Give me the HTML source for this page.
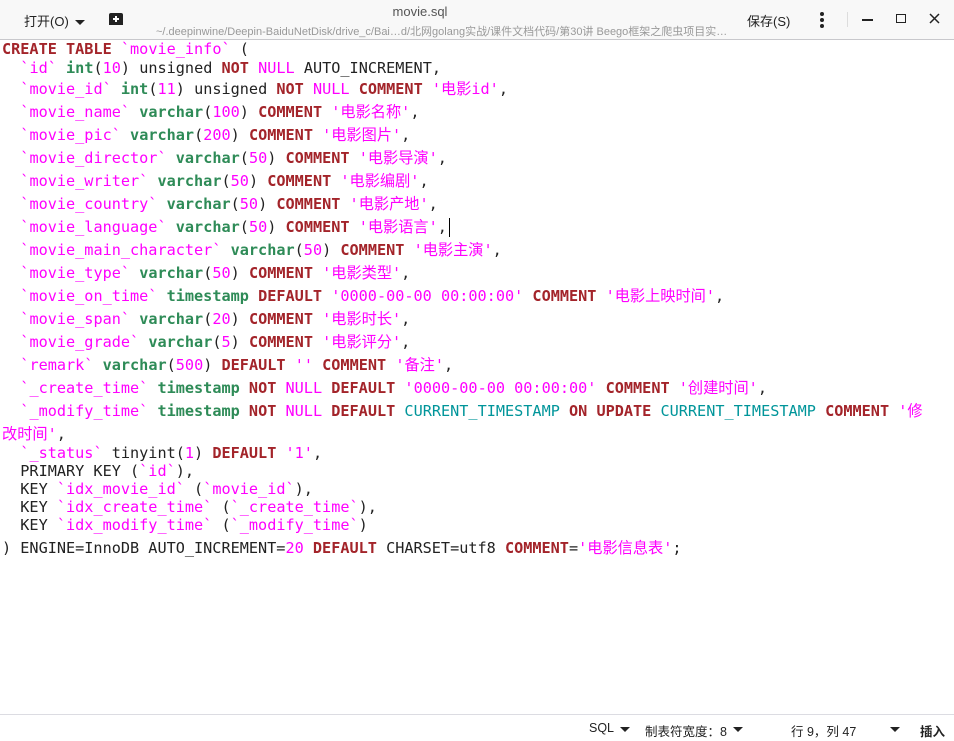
<!DOCTYPE html>
<html><head><meta charset="utf-8"><style>
*{margin:0;padding:0;box-sizing:border-box}
body{width:954px;height:741px;background:#fff;position:relative;overflow:hidden;font-family:"Liberation Sans","Noto Sans CJK SC",sans-serif}
#hdr{position:absolute;left:0;top:0;width:954px;height:40px;background:#f8f8f8;border-bottom:1px solid #c8c8cc}
#hdr .t{position:absolute;font-size:13px;color:#222}
.ed{position:absolute;left:2px;font-family:"DejaVu Sans Mono","Noto Sans CJK SC",monospace;font-size:15.2px;color:#222;white-space:pre;line-height:18px;height:18px}
.k{color:#a3242a;font-weight:bold}
.s{color:#f0f}
.t2{color:#2e8b57;font-weight:bold}
.c{color:#00959a}
#sb{position:absolute;left:0;top:714px;width:954px;height:27px;border-top:1px solid #dcdce2;background:#fff;font-size:12.5px;color:#222}
#sb span{position:absolute;top:6px}
.tri{display:inline-block;width:0;height:0;border-left:5px solid transparent;border-right:5px solid transparent;border-top:5px solid #222;vertical-align:middle;margin-left:6px}
.cur{display:inline-block;width:1px;height:19px;background:#000;vertical-align:middle;margin-left:2px}
</style></head><body>
<div id="hdr">
<div class="t" style="left:24px;top:11px">打开(O)<span class="tri"></span></div>
<svg style="position:absolute;left:108px;top:12px" width="16" height="14"><path d="M1 13V3a2 2 0 0 1 2-2h10a2 2 0 0 1 2 2v10z" fill="#222"/><path d="M8 4v6M5 7h6" stroke="#fff" stroke-width="2"/></svg>
<div class="t" style="left:0;width:840px;text-align:center;top:4px;font-size:13px;color:#555">movie.sql</div>
<div class="t" style="left:156px;top:23px;font-size:11px;color:#999">~/.deepinwine/Deepin-BaiduNetDisk/drive_c/Bai…d/北网golang实战/课件文档代码/第30讲 Beego框架之爬虫项目实…</div>
<div class="t" style="left:747px;top:11px">保存(S)</div>
<svg style="position:absolute;left:818px;top:11px" width="8" height="18"><circle cx="4" cy="3" r="2" fill="#222"/><circle cx="4" cy="9" r="2" fill="#222"/><circle cx="4" cy="15" r="2" fill="#222"/></svg>
<div style="position:absolute;left:847px;top:12px;width:1px;height:15px;background:#ddd"></div>
<div style="position:absolute;left:862px;top:19px;width:11px;height:1.5px;background:#222"></div>
<div style="position:absolute;left:896px;top:14px;width:10px;height:9px;border:1.5px solid #222"></div>
<svg style="position:absolute;left:929px;top:13px" width="11" height="11"><path d="M1 1l9 9M10 1l-9 9" stroke="#222" stroke-width="1.5"/></svg>
</div>

<div class="ed" style="top:40px"><span class="k">CREATE TABLE</span> <span class="s">`movie_info`</span> (</div>
<div class="ed" style="top:59px">  <span class="s">`id`</span> <span class="t2">int</span>(<span class="s">10</span>) unsigned <span class="k">NOT</span> <span class="s">NULL</span> AUTO_INCREMENT,</div>
<div class="ed" style="top:80px">  <span class="s">`movie_id`</span> <span class="t2">int</span>(<span class="s">11</span>) unsigned <span class="k">NOT</span> <span class="s">NULL</span> <span class="k">COMMENT</span> <span class="s">'电影id'</span>,</div>
<div class="ed" style="top:103px">  <span class="s">`movie_name`</span> <span class="t2">varchar</span>(<span class="s">100</span>) <span class="k">COMMENT</span> <span class="s">'电影名称'</span>,</div>
<div class="ed" style="top:126px">  <span class="s">`movie_pic`</span> <span class="t2">varchar</span>(<span class="s">200</span>) <span class="k">COMMENT</span> <span class="s">'电影图片'</span>,</div>
<div class="ed" style="top:149px">  <span class="s">`movie_director`</span> <span class="t2">varchar</span>(<span class="s">50</span>) <span class="k">COMMENT</span> <span class="s">'电影导演'</span>,</div>
<div class="ed" style="top:172px">  <span class="s">`movie_writer`</span> <span class="t2">varchar</span>(<span class="s">50</span>) <span class="k">COMMENT</span> <span class="s">'电影编剧'</span>,</div>
<div class="ed" style="top:195px">  <span class="s">`movie_country`</span> <span class="t2">varchar</span>(<span class="s">50</span>) <span class="k">COMMENT</span> <span class="s">'电影产地'</span>,</div>
<div class="ed" style="top:218px">  <span class="s">`movie_language`</span> <span class="t2">varchar</span>(<span class="s">50</span>) <span class="k">COMMENT</span> <span class="s">'电影语言'</span>,<span class="cur"></span></div>
<div class="ed" style="top:241px">  <span class="s">`movie_main_character`</span> <span class="t2">varchar</span>(<span class="s">50</span>) <span class="k">COMMENT</span> <span class="s">'电影主演'</span>,</div>
<div class="ed" style="top:264px">  <span class="s">`movie_type`</span> <span class="t2">varchar</span>(<span class="s">50</span>) <span class="k">COMMENT</span> <span class="s">'电影类型'</span>,</div>
<div class="ed" style="top:287px">  <span class="s">`movie_on_time`</span> <span class="t2">timestamp</span> <span class="k">DEFAULT</span> <span class="s">'0000-00-00 00:00:00'</span> <span class="k">COMMENT</span> <span class="s">'电影上映时间'</span>,</div>
<div class="ed" style="top:310px">  <span class="s">`movie_span`</span> <span class="t2">varchar</span>(<span class="s">20</span>) <span class="k">COMMENT</span> <span class="s">'电影时长'</span>,</div>
<div class="ed" style="top:333px">  <span class="s">`movie_grade`</span> <span class="t2">varchar</span>(<span class="s">5</span>) <span class="k">COMMENT</span> <span class="s">'电影评分'</span>,</div>
<div class="ed" style="top:356px">  <span class="s">`remark`</span> <span class="t2">varchar</span>(<span class="s">500</span>) <span class="k">DEFAULT</span> <span class="s">''</span> <span class="k">COMMENT</span> <span class="s">'备注'</span>,</div>
<div class="ed" style="top:379px">  <span class="s">`_create_time`</span> <span class="t2">timestamp</span> <span class="k">NOT</span> <span class="s">NULL</span> <span class="k">DEFAULT</span> <span class="s">'0000-00-00 00:00:00'</span> <span class="k">COMMENT</span> <span class="s">'创建时间'</span>,</div>
<div class="ed" style="top:402px">  <span class="s">`_modify_time`</span> <span class="t2">timestamp</span> <span class="k">NOT</span> <span class="s">NULL</span> <span class="k">DEFAULT</span> <span class="c">CURRENT_TIMESTAMP</span> <span class="k">ON UPDATE</span> <span class="c">CURRENT_TIMESTAMP</span> <span class="k">COMMENT</span> <span class="s">'修</span></div>
<div class="ed" style="top:425px"><span class="s">改时间'</span>,</div>
<div class="ed" style="top:444px">  <span class="s">`_status`</span> tinyint(<span class="s">1</span>) <span class="k">DEFAULT</span> <span class="s">'1'</span>,</div>
<div class="ed" style="top:462px">  PRIMARY KEY (<span class="s">`id`</span>),</div>
<div class="ed" style="top:480px">  KEY <span class="s">`idx_movie_id`</span> (<span class="s">`movie_id`</span>),</div>
<div class="ed" style="top:498px">  KEY <span class="s">`idx_create_time`</span> (<span class="s">`_create_time`</span>),</div>
<div class="ed" style="top:516px">  KEY <span class="s">`idx_modify_time`</span> (<span class="s">`_modify_time`</span>)</div>
<div class="ed" style="top:539px">) ENGINE=InnoDB AUTO_INCREMENT=<span class="s">20</span> <span class="k">DEFAULT</span> CHARSET=utf8 <span class="k">COMMENT</span>=<span class="s">'电影信息表'</span>;</div>

<div id="sb">
<span style="left:589px">SQL<span class="tri"></span></span>
<span style="left:645px">制表符宽度：8<span class="tri"></span></span>
<span style="left:791px">行 9，列 47</span>
<span style="left:884px"><span class="tri"></span></span>
<span style="left:920px;font-weight:bold">插入</span>
</div>
</body></html>
